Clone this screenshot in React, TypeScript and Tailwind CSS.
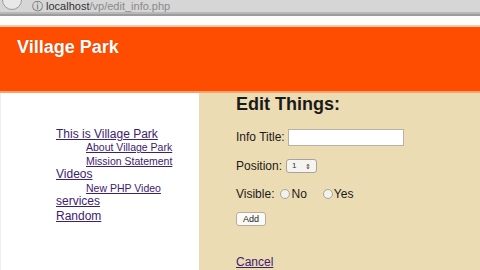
export default function App() {
  const link = "text-[#3d2170] underline";
  return (
    <div className="w-[480px] h-[270px] overflow-hidden bg-white flex flex-col" style={{ fontFamily: '"Liberation Sans", Arial, sans-serif' }}>
      {/* browser chrome */}
      <div className="h-[12px] bg-[#d6d6d6] flex items-end relative shrink-0">
        <div className="absolute left-[2px] top-[-10px] w-[20px] h-[20px] rounded-full border border-[#9a9a9a] bg-[#e8e8e8]" />
        <div className="ml-[30px] h-[12px] flex-1 flex items-end">
          <span className="text-[11px] leading-[11px] text-[#8a8a8a] ml-[2px]"><span className="text-[#555]">&#9432;</span> <span className="text-[#333]">localhost</span>/vp/edit_info.php</span>
        </div>
      </div>
      <div className="h-[2px] bg-[#b8b8b8] shrink-0" />
      <div className="h-[2px] bg-[#9c9c9c] shrink-0" />
      <div className="h-[9px] bg-[#fdfdfc] shrink-0" />
      <div className="h-[2px] bg-[#f7c9a8] shrink-0" />
      {/* header */}
      <div className="h-[64px] bg-[#ff4d00] shrink-0 pl-[17px] pt-[10px]">
        <div className="text-white font-bold text-[18px] leading-[20px]" style={{ textShadow: "0 0 1px rgba(120,40,0,0.5)" }}>Village Park</div>
      </div>
      <div className="h-[2px] bg-[#f7a070] shrink-0" />
      {/* body */}
      <div className="flex flex-1 min-h-0">
        <div className="w-[199px] bg-white pl-[55px] pt-[35px] shrink-0 border-l border-[#eee]">
          <div className="flex flex-col text-[12px] leading-[13.3px]">
            <a className={link}>This is Village Park</a>
            <a className={`${link} ml-[30px] text-[10.5px]`}>About Village Park</a>
            <a className={`${link} ml-[30px] text-[10.5px]`}>Mission Statement</a>
            <a className={link}>Videos</a>
            <a className={`${link} ml-[30px] text-[10.5px] mt-[1px]`}>New PHP Video</a>
            <a className={link}>services</a>
            <a className={`${link} mt-[1px]`}>Random</a>
          </div>
        </div>
        <div className="flex-1 bg-[#ecdcb3] pl-[37px] pt-[1px] text-[#1a1a1a] text-[12px]">
          <div className="font-bold text-[18px] leading-[20px]">Edit Things:</div>
          <div className="flex items-center mt-[14px] h-[18px]">
            <span>Info Title:</span>
            <div className="ml-[3px] w-[116px] h-[17px] bg-white border border-[#b9b2a0]" />
          </div>
          <div className="flex items-center mt-[12px] h-[16px]">
            <span>Position:</span>
            <div className="ml-[4px] w-[31px] h-[14px] bg-[#f6f4f0] border border-[#aaa39a] rounded-[3px] flex items-center justify-between px-[5px] text-[8px] leading-none text-[#333]">
              <span>1</span><span className="text-[7px]">&#8661;</span>
            </div>
          </div>
          <div className="flex items-center mt-[12px] h-[16px]">
            <span>Visible:</span>
            <span className="ml-[6px] w-[10px] h-[10px] rounded-full border border-[#a9a49a] bg-[#f3f1ec]" />
            <span className="ml-[1px]">No</span>
            <span className="ml-[16px] w-[10px] h-[10px] rounded-full border border-[#a9a49a] bg-[#f3f1ec]" />
            <span className="ml-[1px]">Yes</span>
          </div>
          <div className="mt-[10px]">
            <div className="w-[30px] h-[14px] bg-[#fbfaf7] border border-[#b5ada0] rounded-[3px] text-[9px] leading-[12px] text-center">Add</div>
          </div>
          <div className="mt-[27px]">
            <a className="text-[#3d2170] underline text-[12px] leading-[14px]">Cancel</a>
          </div>
        </div>
      </div>
    </div>
  );
}
